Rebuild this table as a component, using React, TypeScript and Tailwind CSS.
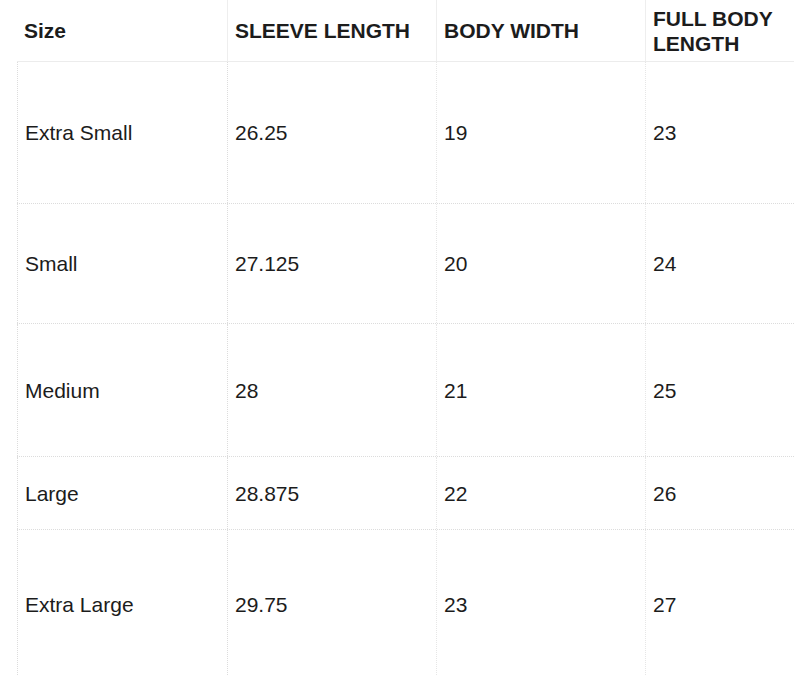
const headers = ["Size", "SLEEVE LENGTH", "BODY WIDTH", "FULL BODY LENGTH"];

const rows = [
  { size: "Extra Small", sleeve: "26.25", width: "19", length: "23", h: "h-[142px]" },
  { size: "Small", sleeve: "27.125", width: "20", length: "24", h: "h-[120px]" },
  { size: "Medium", sleeve: "28", width: "21", length: "25", h: "h-[133px]" },
  { size: "Large", sleeve: "28.875", width: "22", length: "26", h: "h-[73px]" },
  { size: "Extra Large", sleeve: "29.75", width: "23", length: "27", h: "h-[150px]" },
];

export default function App() {
  return (
    <div className="h-[675px] w-[794px] overflow-hidden bg-white font-['Liberation_Sans',Arial,sans-serif] text-[21px] leading-[25px] text-[#1c1c1c]">
      <div className="ml-[17px] w-[837px]">
        <div className="grid h-[62px] grid-cols-[210px_209px_209px_209px] border-b border-[#ececec]">
          {headers.map((title, i) => (
            <div
              key={title}
              className={
                i === 0
                  ? "flex items-center px-[7px] font-bold"
                  : "flex items-center border-l border-[#eeeeee] px-[7px] font-bold"
              }
            >
              {title}
            </div>
          ))}
        </div>
        {rows.map((row) => (
          <div
            key={row.size}
            className={`grid ${row.h} grid-cols-[210px_209px_209px_209px] border-b border-dotted border-[#dcdcdc]`}
          >
            <div className="flex items-center border-l border-dotted border-[#dcdcdc] px-[7px]">
              {row.size}
            </div>
            <div className="flex items-center border-l border-dotted border-[#dcdcdc] px-[7px]">
              {row.sleeve}
            </div>
            <div className="flex items-center border-l border-dotted border-[#e6e6e6] px-[7px]">
              {row.width}
            </div>
            <div className="flex items-center border-l border-dotted border-[#e6e6e6] px-[7px]">
              {row.length}
            </div>
          </div>
        ))}
      </div>
    </div>
  );
}
